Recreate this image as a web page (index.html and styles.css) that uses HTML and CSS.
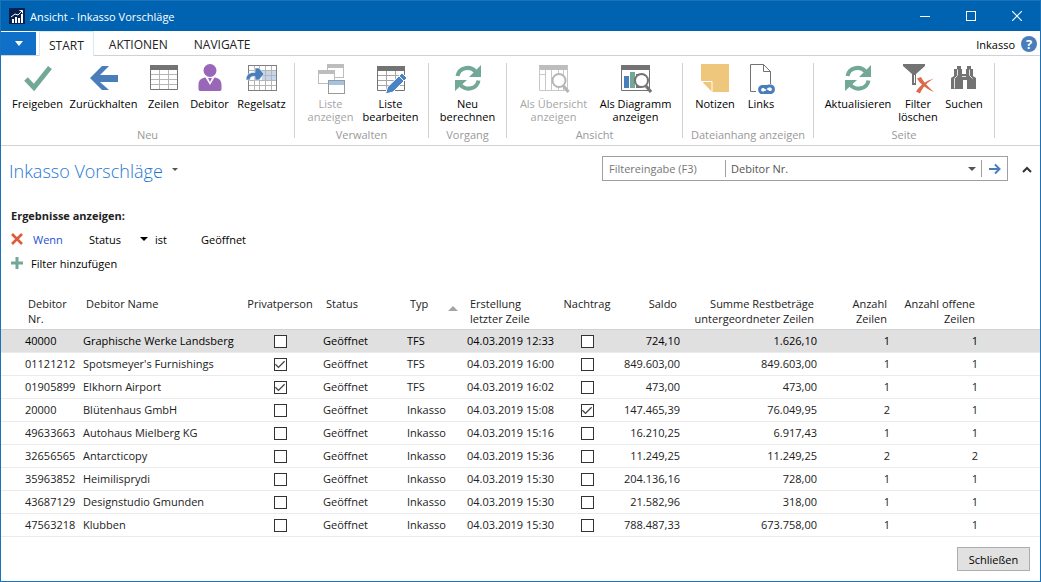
FILE: index.html
```
<!DOCTYPE html>
<html lang="de">
<head>
  <meta charset="UTF-8">
  <title>Ansicht - Inkasso Vorschläge</title>
  <link rel="stylesheet" href="styles.css">
</head>
<body>
  <header class="titlebar">
    <svg class="app-icon" width="16" height="16" viewBox="0 0 16 16">
      <rect width="16" height="16" fill="#06204f"/>
      <path d="M3 11h2v4H3zM6 9h2v6H6zM9 10h2v5H9zM12 6h2v9h-2z" fill="#fff"/>
      <path d="M2 9l4-3 3 1 4-4M10.500 2.500h3v3" fill="none" stroke="#fff"/>
    </svg>
    <span class="window-title">Ansicht - Inkasso Vorschläge</span>
    <button class="win-btn" aria-label="Minimieren"><svg width="10" height="10"><path d="M0 5.500h10" stroke="#fff"/></svg></button>
    <button class="win-btn" aria-label="Maximieren"><svg width="10" height="10"><rect x=".5" y=".5" width="9" height="9" fill="none" stroke="#fff"/></svg></button>
    <button class="win-btn" aria-label="Fenster schließen"><svg width="10" height="10"><path d="M0 0l10 10M10 0L0 10" stroke="#fff" stroke-width="1.200"/></svg></button>
  </header>

  <nav class="tabs">
    <button class="file-tab" aria-label="Anwendungsmenü"><svg width="8" height="5"><path d="M0 0h8L4 5z" fill="#fff"/></svg></button>
    <a href="#" class="tab active">START</a>
    <a href="#" class="tab">AKTIONEN</a>
    <a href="#" class="tab">NAVIGATE</a>
    <span class="company">Inkasso</span>
    <button class="help" aria-label="Hilfe">?</button>
  </nav>

  <div class="ribbon">
    <section class="group group-neu">
      <div class="buttons">
        <button class="rb rb-m">
          <svg width="30" height="30" viewBox="0 0 30 30"><path d="M3 15l8 8.500L27 3.500" fill="none" stroke="#72a897" stroke-width="5"/></svg>
          Freigeben
        </button>
        <button class="rb rb-l">
          <svg width="30" height="30" viewBox="0 0 30 30"><path d="M1 14L13 2h7l-9 9h18v7H11l9 8h-7z" fill="#4a7ebb"/></svg>
          Zurückhalten
        </button>
        <button class="rb rb-s">
          <svg width="30" height="30" viewBox="0 0 30 30">
            <path d="M1 1h28v5H1z" fill="#737373"/>
            <path d="M1.500 2v23.500h27V2" fill="none" stroke="#737373"/>
            <path d="M2 10.500h26M2 15.500h26M2 20.500h26M10.500 6v19M19.500 6v19" stroke="#b5b5b5"/>
          </svg>
          Zeilen
        </button>
        <button class="rb rb-s">
          <svg width="30" height="30" viewBox="0 0 30 30">
            <circle cx="15" cy="6.500" r="6.500" fill="#9966b8"/>
            <path d="M3.500 25v-4c0-5 3-7 7-7.500l4.500 7.500 4.500-7.500c4 .5 7 2.500 7 7.500v4c0 1.500-1 2-2 2h-19c-1 0-2-.5-2-2z" fill="#9966b8"/>
            <path d="M13 14h4l-2 4z" fill="#9966b8"/>
          </svg>
          Debitor
        </button>
        <button class="rb rb-m">
          <svg width="32" height="30" viewBox="0 0 32 30">
            <path d="M16 6h14v10H16z" fill="#c3d6ec"/>
            <path d="M3 6.500h28M3 11.500h28M3 16.500h28M3 21.500h28M8.500 2v24M13.500 2v24M19.500 2v24M25.500 2v24" stroke="#b5b5b5"/>
            <rect x="2.500" y="1.500" width="28" height="25" fill="none" stroke="#808080"/>
            <path d="M0 16c0-6 4-8 9-7.500V4h4l5 6-5 6H9v-3.500c-4-.5-5 1-5 3.500z" fill="#4a7ebb" stroke="#fff" stroke-width=".6"/>
          </svg>
          Regelsatz
        </button>
      </div>
      <h2>Neu</h2>
    </section>

    <section class="group group-verwalten">
      <div class="buttons">
        <button class="rb rb-m" disabled>
          <svg width="30" height="30" viewBox="0 0 30 30">
            <g fill="#fff" stroke="#bdbdbd">
              <rect x="11.500" y="0.500" width="16" height="13"/>
              <rect x="2.500" y="6.500" width="16" height="13"/>
              <rect x="12.500" y="16.500" width="16" height="13" stroke="#9a9a9a"/>
            </g>
            <path d="M11 0h17v4H11zM2 6h17v4H2z" fill="#bdbdbd"/>
            <path d="M13 17h15v4H13z" fill="#a4c2e3"/>
          </svg>
          Liste<br>anzeigen
        </button>
        <button class="rb rb-m">
          <svg width="30" height="30" viewBox="0 0 30 30">
            <path d="M1 2h28v5H1z" fill="#737373"/>
            <path d="M1.500 2v24.500h27V2" fill="none" stroke="#737373"/>
            <path d="M2 11.500h26M2 16.500h26M2 21.500h26M10.500 7v19M19.500 7v19" stroke="#a5a5a5"/>
            <path d="M9.500 30l2-7L26 9l5 5-14 14z" fill="#4a84c4" stroke="#fff"/>
            <path d="M23 12l5 5" stroke="#fff"/>
          </svg>
          Liste<br>bearbeiten
        </button>
      </div>
      <h2>Verwalten</h2>
    </section>

    <section class="group group-vorgang">
      <div class="buttons">
        <button class="rb rb-m">
          <svg width="30" height="30" viewBox="0 0 30 30">
            <path d="M4.500 12C6 3.500 17 1 23 8M25.500 16.500C24 25 13 27.500 7 20.500" fill="none" stroke="#72a897" stroke-width="4"/>
            <path d="M28 1v12H16zM2 27V16h12z" fill="#72a897"/>
          </svg>
          Neu<br>berechnen
        </button>
      </div>
      <h2>Vorgang</h2>
    </section>

    <section class="group group-ansicht">
      <div class="buttons">
        <button class="rb rb-xl" disabled>
          <svg width="32" height="30" viewBox="0 0 32 30">
            <path d="M1 1h29v5H1z" fill="#bdbdbd"/>
            <path d="M1.500 2v24.500h28V2M7.500 6v20M13.500 6v20M20.500 6v20M25.500 6v20M2 10.500h5" fill="none" stroke="#c8c8c8"/>
            <circle cx="21" cy="16.500" r="6.500" fill="#fff" stroke="#b5b5b5" stroke-width="2"/>
            <path d="M25.500 22l5 6" stroke="#b5b5b5" stroke-width="3"/>
          </svg>
          Als Übersicht<br>anzeigen
        </button>
        <button class="rb rb-xl">
          <svg width="32" height="30" viewBox="0 0 32 30">
            <path d="M1 1h29v5H1z" fill="#737373"/>
            <path d="M1.500 2v24.500h28V2" fill="none" stroke="#737373"/>
            <path d="M4 12h5v12H4z" fill="#4a7ebb"/>
            <path d="M10 8h5v16h-5z" fill="#72a897"/>
            <path d="M16 10h5v14h-5z" fill="#737373"/>
            <circle cx="21.500" cy="16.500" r="6.500" fill="#fff" stroke="#737373" stroke-width="2"/>
            <path d="M26 22l5 6" stroke="#737373" stroke-width="3"/>
          </svg>
          Als Diagramm<br>anzeigen
        </button>
      </div>
      <h2>Ansicht</h2>
    </section>

    <section class="group group-anhang">
      <div class="buttons">
        <button class="rb rb-s">
          <svg width="30" height="30" viewBox="0 0 30 30">
            <path d="M1 0h28v28H12L1 17z" fill="#efc77c"/>
            <path d="M1.500 17.500h10.500v11z" fill="#efc77c" stroke="#fff"/>
          </svg>
          Notizen
        </button>
        <button class="rb rb-s">
          <svg width="30" height="30" viewBox="0 0 30 30">
            <path d="M10 27.500H4.500V.5h13l7 7V20M17.500 .5v7h7" fill="none" stroke="#737373"/>
            <g fill="none" stroke="#4a7ebb" stroke-width="3">
              <path d="M21 22.500h-5a3.400 3.400 0 0 0 0 6.500h2c2 0 3-1.500 4-3"/>
              <path d="M18 28.500h7a3.400 3.400 0 0 0 0-6.500h-2c-2 0-3 1.500-4 3"/>
            </g>
          </svg>
          Links
        </button>
      </div>
      <h2>Dateianhang anzeigen</h2>
    </section>

    <section class="group group-seite">
      <div class="buttons">
        <button class="rb rb-l">
          <svg width="30" height="30" viewBox="0 0 30 30">
            <path d="M4.500 12C6 3.500 17 1 23 8M25.500 16.500C24 25 13 27.500 7 20.500" fill="none" stroke="#72a897" stroke-width="4"/>
            <path d="M28 1v12H16zM2 27V16h12z" fill="#72a897"/>
          </svg>
          Aktualisieren
        </button>
        <button class="rb rb-s">
          <svg width="32" height="30" viewBox="0 0 32 30">
            <path d="M1 0h22v2l-9 8v11h-4V10L1 2z" fill="#737373"/>
            <path d="M12.500 11v8" stroke="#fff"/>
            <path d="M15 14.500l4-1.500c2 4 8 11 13 15-6-2-14-8-17-13.500z" fill="#dd6a4b"/>
            <path d="M32 14.500c-6 3-11 8-14 15l-4-2c4-6 10-11 18-13z" fill="#dd6a4b"/>
          </svg>
          Filter<br>löschen
        </button>
        <button class="rb rb-s">
          <svg width="30" height="30" viewBox="0 0 30 30">
            <path d="M8 2h4v3h1v5h4V5h1V2h4v3h2v7l3 2v11h-9v-9h-4v9H2V14l3-2V5h3z" fill="#737373"/>
            <path d="M8.500 5.500v6l-3 3v10M20.500 5.500v6l3 3M13 12.500h4" fill="none" stroke="#e4e4e4"/>
          </svg>
          Suchen
        </button>
      </div>
      <h2>Seite</h2>
    </section>
  </div>

  <main>
    <div class="page-head">
      <h1>Inkasso Vorschläge</h1>
      <button class="plain title-menu" aria-label="Ansichten"><svg width="6" height="3"><path d="M0 0h6L3 3z" fill="#555"/></svg></button>
      <form class="search">
        <input type="text" placeholder="Filtereingabe (F3)" aria-label="Filtereingabe">
        <div class="drop">
          <select aria-label="Filterfeld"><option>Debitor Nr.</option></select>
          <svg width="8" height="4"><path d="M0 0h8L4 4z" fill="#555"/></svg>
        </div>
        <button type="button" class="plain go" aria-label="Filter anwenden"><svg width="12" height="12" viewBox="0 0 12 12"><path d="M0 6h10M6 1.500L10.500 6 6 10.500" fill="none" stroke="#4a7ebb" stroke-width="2"/></svg></button>
      </form>
      <button class="plain collapse" aria-label="Filterbereich einklappen"><svg width="10" height="7" viewBox="0 0 10 7"><path d="M1 6l4-4 4 4" fill="none" stroke="#333" stroke-width="2"/></svg></button>
    </div>

    <div class="filters">
      <h3>Ergebnisse anzeigen:</h3>
      <div class="filter-row">
        <button class="plain filter-icon" aria-label="Filter entfernen"><svg width="12" height="12" viewBox="0 0 12 12"><path d="M1 1l10 10M11 1L1 11" stroke="#dd5a3b" stroke-width="2.600"/></svg></button>
        <a href="#" class="when">Wenn</a>
        <div class="drop field">
          <select aria-label="Feld"><option>Status</option></select>
          <svg width="8" height="4"><path d="M0 0h8L4 4z" fill="#000"/></svg>
        </div>
        <label for="filterWert">ist</label>
        <input type="text" id="filterWert" value="Geöffnet">
      </div>
      <button class="plain filter-row">
        <span class="filter-icon"><svg width="12" height="12" viewBox="0 0 12 12"><path d="M6 0v12M0 6h12" stroke="#72a897" stroke-width="3"/></svg></span>
        Filter hinzufügen
      </button>
    </div>

    <table>
      <colgroup>
        <col class="c-nr"><col class="c-name"><col class="c-privat"><col class="c-status"><col class="c-typ"><col class="c-datum"><col class="c-nachtrag"><col class="c-saldo"><col class="c-summe"><col class="c-anzahl"><col class="c-offen"><col>
      </colgroup>
      <thead>
        <tr>
          <th>Debitor<br>Nr.</th>
          <th>Debitor Name</th>
          <th class="mid">Privatperson</th>
          <th>Status</th>
          <th><div class="sorted">Typ <svg width="10" height="5"><path d="M5 0l5 5H0z" fill="#a5a5a5"/></svg></div></th>
          <th>Erstellung<br>letzter Zeile</th>
          <th class="mid">Nachtrag</th>
          <th class="num">Saldo</th>
          <th class="num">Summe Restbeträge<br>untergeordneter Zeilen</th>
          <th class="num">Anzahl<br>Zeilen</th>
          <th class="num">Anzahl offene<br>Zeilen</th>
          <th></th>
        </tr>
      </thead>
      <tbody>
        <tr class="selected"><td>40000</td><td>Graphische Werke Landsberg</td><td class="mid"><input type="checkbox" aria-label="Privatperson"></td><td>Geöffnet</td><td>TFS</td><td>04.03.2019 12:33</td><td class="mid"><input type="checkbox" aria-label="Nachtrag"></td><td class="num">724,10</td><td class="num">1.626,10</td><td class="num">1</td><td class="num">1</td><td></td></tr>
        <tr><td>01121212</td><td>Spotsmeyer's Furnishings</td><td class="mid"><input type="checkbox" aria-label="Privatperson" checked></td><td>Geöffnet</td><td>TFS</td><td>04.03.2019 16:00</td><td class="mid"><input type="checkbox" aria-label="Nachtrag"></td><td class="num">849.603,00</td><td class="num">849.603,00</td><td class="num">1</td><td class="num">1</td><td></td></tr>
        <tr><td>01905899</td><td>Elkhorn Airport</td><td class="mid"><input type="checkbox" aria-label="Privatperson" checked></td><td>Geöffnet</td><td>TFS</td><td>04.03.2019 16:02</td><td class="mid"><input type="checkbox" aria-label="Nachtrag"></td><td class="num">473,00</td><td class="num">473,00</td><td class="num">1</td><td class="num">1</td><td></td></tr>
        <tr><td>20000</td><td>Blütenhaus GmbH</td><td class="mid"><input type="checkbox" aria-label="Privatperson"></td><td>Geöffnet</td><td>Inkasso</td><td>04.03.2019 15:08</td><td class="mid"><input type="checkbox" aria-label="Nachtrag" checked></td><td class="num">147.465,39</td><td class="num">76.049,95</td><td class="num">2</td><td class="num">1</td><td></td></tr>
        <tr><td>49633663</td><td>Autohaus Mielberg KG</td><td class="mid"><input type="checkbox" aria-label="Privatperson"></td><td>Geöffnet</td><td>Inkasso</td><td>04.03.2019 15:16</td><td class="mid"><input type="checkbox" aria-label="Nachtrag"></td><td class="num">16.210,25</td><td class="num">6.917,43</td><td class="num">1</td><td class="num">1</td><td></td></tr>
        <tr><td>32656565</td><td>Antarcticopy</td><td class="mid"><input type="checkbox" aria-label="Privatperson"></td><td>Geöffnet</td><td>Inkasso</td><td>04.03.2019 15:36</td><td class="mid"><input type="checkbox" aria-label="Nachtrag"></td><td class="num">11.249,25</td><td class="num">11.249,25</td><td class="num">2</td><td class="num">2</td><td></td></tr>
        <tr><td>35963852</td><td>Heimilisprydi</td><td class="mid"><input type="checkbox" aria-label="Privatperson"></td><td>Geöffnet</td><td>Inkasso</td><td>04.03.2019 15:30</td><td class="mid"><input type="checkbox" aria-label="Nachtrag"></td><td class="num">204.136,16</td><td class="num">728,00</td><td class="num">1</td><td class="num">1</td><td></td></tr>
        <tr><td>43687129</td><td>Designstudio Gmunden</td><td class="mid"><input type="checkbox" aria-label="Privatperson"></td><td>Geöffnet</td><td>Inkasso</td><td>04.03.2019 15:30</td><td class="mid"><input type="checkbox" aria-label="Nachtrag"></td><td class="num">21.582,96</td><td class="num">318,00</td><td class="num">1</td><td class="num">1</td><td></td></tr>
        <tr><td>47563218</td><td>Klubben</td><td class="mid"><input type="checkbox" aria-label="Privatperson"></td><td>Geöffnet</td><td>Inkasso</td><td>04.03.2019 15:30</td><td class="mid"><input type="checkbox" aria-label="Nachtrag"></td><td class="num">788.487,33</td><td class="num">673.758,00</td><td class="num">1</td><td class="num">1</td><td></td></tr>
      </tbody>
    </table>
  </main>

  <footer>
    <button class="close-btn">Schließen</button>
  </footer>
</body>
</html>
```

FILE: styles.css
```
* {
  box-sizing: border-box;
}
body {
  margin: 0;
  min-height: 100vh;
  display: flex;
  flex-direction: column;
  font-family: "Open Sans", "Noto Sans", sans-serif;
  font-size: 11px;
  color: #222;
  background: white;
  border: 1px solid #1a73b9;
}
button, input, select {
  font: inherit;
  color: inherit;
  margin: 0;
}
svg {
  display: block;
  flex: none;
}
.plain {
  background: none;
  border: none;
  padding: 0;
  display: flex;
  align-items: center;
}

/* title bar */
.titlebar {
  display: flex;
  align-items: center;
  height: 30px;
  padding-left: 8px;
  background: #0063b1;
  color: white;
}
.window-title {
  flex: 1;
  margin-left: 5px;
}
.win-btn {
  width: 46px;
  height: 30px;
  padding: 0;
  display: flex;
  align-items: center;
  justify-content: center;
  background: none;
  border: none;
}

/* tabs */
.tabs {
  display: flex;
  align-items: flex-end;
  height: 25px;
  border-bottom: 1px solid #d2d2d2;
  color: #000;
}
.file-tab {
  width: 35px;
  height: 23px;
  margin: 0 3px 0 0;
  padding: 0;
  display: flex;
  align-items: center;
  justify-content: center;
  background: #1070c9;
  border: none;
}
.tab {
  height: 24px;
  padding: 0 11px;
  margin-right: 4px;
  line-height: 28px;
  font-size: 12px;
  color: #222;
  text-decoration: none;
}
.tab.active {
  background: white;
  border: 1px solid #d9eaf7;
  border-bottom: none;
  margin-bottom: -1px;
  height: 25px;
  padding: 0 9px;
}
.company {
  margin-left: auto;
  line-height: 20px;
}
.help {
  width: 16px;
  height: 16px;
  margin: 0 3px 3px 6px;
  padding: 0;
  border: none;
  border-radius: 50%;
  background: #4a7ebb;
  color: white;
  font-size: 13px;
  font-weight: bold;
  line-height: 16px;
}

/* ribbon */
.ribbon {
  display: flex;
  padding: 7px 0;
  border-bottom: 1px solid #d2d2d2;
}
.group {
  flex: none;
  display: flex;
  flex-direction: column;
  height: 75px;
  border-right: 1px solid #d2d2d2;
}
.group-neu { width: 294px; }
.group-verwalten { width: 134px; }
.group-vorgang { width: 78px; }
.group-ansicht { width: 176px; }
.group-anhang { width: 131px; }
.group-seite { width: 181px; }
.buttons {
  flex: 1;
  display: flex;
  justify-content: center;
}
.group-neu .buttons {
  padding-left: 4px;
}
.group-verwalten .buttons {
  gap: 2px;
  padding-right: 2px;
}
.group-anhang .buttons {
  justify-content: flex-start;
  padding-left: 9px;
}
/* the caption hangs a little below the separators */
.group h2 {
  margin: 0 0 -3px;
  font-size: 11px;
  font-weight: normal;
  line-height: 12px;
  text-align: center;
  white-space: nowrap;
  color: #999;
}
.rb {
  display: flex;
  flex-direction: column;
  align-items: center;
  justify-content: flex-start;
  padding: 0;
  border: none;
  background: none;
  color: #000;
  line-height: 13px;
  white-space: nowrap;
}
.rb svg {
  margin: 1px 0 3px;
}
.rb:disabled {
  color: #a5a5a5;
}
.rb-s { width: 46px; }
.rb-m { width: 58px; }
.rb-l { width: 74px; }
.rb-xl { width: 82px; }

/* page */
main {
  flex: 1;
}
.page-head {
  display: flex;
  align-items: center;
  padding: 10px 3px 0 8px;
}
h1 {
  margin: 4px 0 0;
  font-size: 18px;
  font-weight: 300;
  line-height: 22px;
  color: #1f78cf;
}
.title-menu {
  margin-left: 9px;
}
.search {
  display: flex;
  width: 406px;
  height: 25px;
  margin: 0 0 1px auto;
  border: 1px solid #a0a0a0;
  color: #555;
}
.search input {
  width: 122px;
  padding: 0 6px;
  border: none;
  background: none;
}
.search input::placeholder {
  color: #777;
}
.drop {
  display: flex;
  align-items: center;
}
.drop select {
  flex: 1;
  appearance: none;
  border: none;
  background: none;
  padding: 0;
}
.search .drop {
  flex: 1;
  margin: 3px 0;
  padding: 0 5px;
  border: solid #a0a0a0;
  border-width: 0 1px;
}
.go {
  width: 25px;
  justify-content: center;
}
.collapse {
  width: 20px;
  margin-left: 9px;
  justify-content: center;
}

/* filters */
.filters {
  padding: 26px 10px 0;
  color: #000;
}
.filters h3 {
  margin: 0 0 3px;
  font-size: 11px;
  line-height: 16px;
  color: #222;
}
.filter-row {
  display: flex;
  align-items: center;
  height: 24px;
}
.filter-icon {
  width: 20px;
}
.when {
  width: 58px;
  padding-left: 2px;
  color: #1c4fd0;
  text-decoration: none;
}
.field {
  width: 59px;
  margin-right: 7px;
}
.filter-row input {
  width: 160px;
  margin-left: 34px;
  padding: 0;
  border: none;
  background: none;
}

/* list */
table {
  width: 100%;
  margin-top: 21px;
  table-layout: fixed;
  border-spacing: 0;
}
.c-nr { width: 79px; }
.c-name { width: 160px; }
.c-privat { width: 80px; }
.c-status { width: 84px; }
.c-typ { width: 60px; }
.c-datum { width: 94px; }
.c-nachtrag { width: 58px; }
.c-saldo { width: 67px; }
.c-summe { width: 137px; }
.c-anzahl { width: 73px; }
.c-offen { width: 88px; }
th {
  padding: 0 6px 3px;
  border-bottom: 1px solid #d2d2d2;
  font-weight: normal;
  line-height: 15px;
  text-align: left;
  vertical-align: top;
  white-space: nowrap;
}
td {
  height: 23px;
  padding: 0 3px;
  border-bottom: 1px solid #ebebeb;
  line-height: 22px;
  white-space: nowrap;
}
th:first-child {
  padding-left: 27px;
}
td:first-child {
  padding-left: 24px;
}
.mid {
  padding-left: 0;
  padding-right: 0;
  text-align: center;
}
.num {
  text-align: right;
}
.sorted {
  display: flex;
  align-items: flex-end;
  justify-content: space-between;
}
.selected td {
  background: #e0e0e0;
  color: #000;
}
td input {
  appearance: none;
  display: block;
  width: 13px;
  height: 13px;
  margin: 1px auto 0;
  border: 1px solid #333;
  background: white;
}
td input:checked::before {
  content: "";
  display: block;
  width: 11px;
  height: 11px;
  background: #444;
  clip-path: polygon(4% 52%, 12% 44%, 36% 68%, 88% 16%, 96% 24%, 36% 84%);
}

footer {
  display: flex;
  justify-content: flex-end;
  padding: 10px;
}
.close-btn {
  width: 73px;
  height: 24px;
  padding: 0;
  border: 1px solid #adadad;
  background: #e1e1e1;
  color: #000;
}
```
